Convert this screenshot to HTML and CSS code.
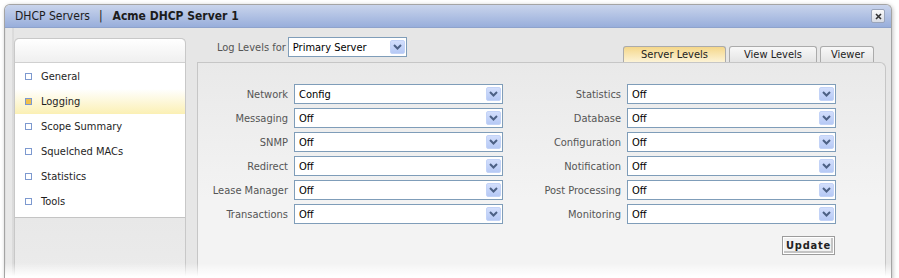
FILE: index.html
```html
<!DOCTYPE html>
<html lang="en">
<head>
  <meta charset="UTF-8" />
  <title>Acme DHCP Server 1</title>
  <link rel="stylesheet" href="styles.css">
</head>
<body>
  <div class="window">
    <div class="titlebar">
      <span class="crumb">DHCP Servers</span>
      <span class="sep">|</span>
      <span class="current">Acme DHCP Server 1</span>
      <span class="close">
        <svg width="7" height="7" viewBox="0 0 7 7"><path d="M1 1L6 6M6 1L1 6" stroke="#333" stroke-width="1.6"/></svg>
      </span>
    </div>

    <div class="body">
      <div class="sidebar">
        <div class="sidebar-head"></div>
        <ul class="nav">
          <li><span class="bullet"></span>General</li>
          <li class="active"><span class="bullet"></span>Logging</li>
          <li><span class="bullet"></span>Scope Summary</li>
          <li><span class="bullet"></span>Squelched MACs</li>
          <li><span class="bullet"></span>Statistics</li>
          <li><span class="bullet"></span>Tools</li>
        </ul>
        <div class="sidebar-foot"></div>
      </div>

      <div class="main">
        <div class="topbar">
          <div class="log-for">
            <span class="label">Log Levels for</span>
            <div class="select server-select">
              <span class="value">Primary Server</span>
              <span class="arrow"><svg width="9" height="6" viewBox="0 0 9 6"><path d="M1 1L4.5 4.5L8 1" fill="none" stroke="#4d6185" stroke-width="2"/></svg></span>
            </div>
          </div>
          <div class="tabs">
            <div class="tab active">Server Levels</div>
            <div class="tab">View Levels</div>
            <div class="tab">Viewer</div>
          </div>
        </div>

        <div class="panel">
          <div class="levels">
            <span class="label">Network</span>
            <div class="select"><span class="value">Config</span><span class="arrow"><svg width="9" height="6" viewBox="0 0 9 6"><path d="M1 1L4.5 4.5L8 1" fill="none" stroke="#4d6185" stroke-width="2"/></svg></span></div>
            <span class="label">Statistics</span>
            <div class="select"><span class="value">Off</span><span class="arrow"><svg width="9" height="6" viewBox="0 0 9 6"><path d="M1 1L4.5 4.5L8 1" fill="none" stroke="#4d6185" stroke-width="2"/></svg></span></div>

            <span class="label">Messaging</span>
            <div class="select"><span class="value">Off</span><span class="arrow"><svg width="9" height="6" viewBox="0 0 9 6"><path d="M1 1L4.5 4.5L8 1" fill="none" stroke="#4d6185" stroke-width="2"/></svg></span></div>
            <span class="label">Database</span>
            <div class="select"><span class="value">Off</span><span class="arrow"><svg width="9" height="6" viewBox="0 0 9 6"><path d="M1 1L4.5 4.5L8 1" fill="none" stroke="#4d6185" stroke-width="2"/></svg></span></div>

            <span class="label">SNMP</span>
            <div class="select"><span class="value">Off</span><span class="arrow"><svg width="9" height="6" viewBox="0 0 9 6"><path d="M1 1L4.5 4.5L8 1" fill="none" stroke="#4d6185" stroke-width="2"/></svg></span></div>
            <span class="label">Configuration</span>
            <div class="select"><span class="value">Off</span><span class="arrow"><svg width="9" height="6" viewBox="0 0 9 6"><path d="M1 1L4.5 4.5L8 1" fill="none" stroke="#4d6185" stroke-width="2"/></svg></span></div>

            <span class="label">Redirect</span>
            <div class="select"><span class="value">Off</span><span class="arrow"><svg width="9" height="6" viewBox="0 0 9 6"><path d="M1 1L4.5 4.5L8 1" fill="none" stroke="#4d6185" stroke-width="2"/></svg></span></div>
            <span class="label">Notification</span>
            <div class="select"><span class="value">Off</span><span class="arrow"><svg width="9" height="6" viewBox="0 0 9 6"><path d="M1 1L4.5 4.5L8 1" fill="none" stroke="#4d6185" stroke-width="2"/></svg></span></div>

            <span class="label">Lease Manager</span>
            <div class="select"><span class="value">Off</span><span class="arrow"><svg width="9" height="6" viewBox="0 0 9 6"><path d="M1 1L4.5 4.5L8 1" fill="none" stroke="#4d6185" stroke-width="2"/></svg></span></div>
            <span class="label">Post Processing</span>
            <div class="select"><span class="value">Off</span><span class="arrow"><svg width="9" height="6" viewBox="0 0 9 6"><path d="M1 1L4.5 4.5L8 1" fill="none" stroke="#4d6185" stroke-width="2"/></svg></span></div>

            <span class="label">Transactions</span>
            <div class="select"><span class="value">Off</span><span class="arrow"><svg width="9" height="6" viewBox="0 0 9 6"><path d="M1 1L4.5 4.5L8 1" fill="none" stroke="#4d6185" stroke-width="2"/></svg></span></div>
            <span class="label">Monitoring</span>
            <div class="select"><span class="value">Off</span><span class="arrow"><svg width="9" height="6" viewBox="0 0 9 6"><path d="M1 1L4.5 4.5L8 1" fill="none" stroke="#4d6185" stroke-width="2"/></svg></span></div>
          </div>
          <div class="actions">
            <button class="update-btn">Update</button>
          </div>
        </div>
      </div>
    </div>
  </div>
</body>
</html>
```

FILE: styles.css
```css
body {
  margin: 0;
  padding: 4px 7px 0 4px;
  height: 278px;
  box-sizing: border-box;
  background: #fff;
  font-family: 'DejaVu Sans Condensed', 'DejaVu Sans', sans-serif;
  font-stretch: condensed;
  font-size: 11px;
  color: #222;
  overflow: hidden;
}

.window {
  position: relative;
  height: 274px;
  border: 1px solid #a4a4a4;
  border-bottom: 0;
  border-radius: 6px 6px 0 0;
  background: #e3e3e3;
  box-shadow: 1px 1px 4px rgba(0, 0, 0, 0.25);
  overflow: hidden;
}

/* fade out the bottom edge */
.window::after {
  content: '';
  position: absolute;
  left: 0;
  right: 0;
  bottom: 0;
  height: 16px;
  background: linear-gradient(rgba(255, 255, 255, 0), #fff 85%);
}

.titlebar {
  display: flex;
  align-items: center;
  height: 22px;
  padding: 0 6px 0 10px;
  border-bottom: 1px solid #8ea3cc;
  background: linear-gradient(#c9d4ec, #98aedb);
  font-size: 12px;
  color: #1c1c1c;
}

.sep {
  margin: 0 10px 0 9px;
}

.current {
  font-weight: bold;
}

.close {
  margin-left: auto;
  width: 12px;
  height: 12px;
  display: flex;
  align-items: center;
  justify-content: center;
  border: 1px solid #9aa5bb;
  border-radius: 2px;
  background: linear-gradient(#fafafa, #d8dce4);
}

.body {
  display: flex;
  gap: 11px;
  padding: 10px 5px 0 9px;
  background: linear-gradient(90deg, #d6d6d6 0, #e8e8e8 1px, #e8e8e8 7px, #cfcfcf 8px, #e6e6e6 9px);
  height: 251px;
}

/* sidebar */
.sidebar {
  width: 170px;
  border: 1px solid #c8c8c8;
  border-bottom: 0;
  border-radius: 5px 5px 0 0;
  background: #e9e9e9;
  display: flex;
  flex-direction: column;
}

.sidebar-head {
  height: 23px;
  border-radius: 5px 5px 0 0;
  border-bottom: 1px solid #d0d0d0;
  background: linear-gradient(#fff, #efefef);
}

.nav {
  list-style: none;
  margin: 0;
  padding: 1px 0 3px;
  background: #fff;
  border-bottom: 1px solid #c4c4c4;
}

.nav li {
  display: flex;
  align-items: center;
  height: 25px;
  padding-left: 10px;
  color: #1e1e1e;
}

.nav li.active {
  background: linear-gradient(#fff, #fbf0b4);
}

.bullet {
  width: 5px;
  height: 5px;
  margin-right: 9px;
  border: 1px solid #7d99cf;
  background: #fff;
}

.nav li.active .bullet {
  background: #f0c04c;
}

.sidebar-foot {
  flex: 1;
  background: linear-gradient(#e8e8e8, #ececec);
}

/* main area */
.main {
  flex: 1;
  display: flex;
  flex-direction: column;
}

.topbar {
  display: flex;
  justify-content: space-between;
  align-items: flex-end;
  height: 25px;
  padding: 0 12px 0 20px;
  margin-top: -1px;
}

.log-for {
  align-self: flex-start;
  display: flex;
  align-items: center;
  gap: 2px;
}

.log-for .label {
  color: #555;
}

.server-select {
  width: 119px;
}

.tabs {
  display: flex;
  gap: 3px;
}

.tab {
  height: 15px;
  line-height: 15px;
  padding: 0 10px;
  border: 1px solid #ababab;
  border-bottom: 0;
  border-radius: 3px 3px 0 0;
  background: linear-gradient(#f8f8f8, #e4e4e4);
  color: #222;
  text-align: center;
}

.tab.active {
  width: 81px;
  background: linear-gradient(#f5d78a, #fcf3d6);
}

.tab:nth-child(2) {
  width: 66px;
}

.tab:nth-child(3) {
  width: 32px;
}

.panel {
  flex: 1;
  border: 1px solid #c6c6c6;
  border-bottom: 0;
  border-radius: 0 6px 0 0;
  background: linear-gradient(#e9e9e9, #f3f3f3 60%);
  padding-top: 21px;
}

.levels {
  display: grid;
  grid-template-columns: 90px 209px 112px 209px;
  column-gap: 6px;
  row-gap: 4px;
  align-items: center;
}

.levels .label {
  text-align: right;
  color: #555;
  white-space: nowrap;
}

.select {
  display: flex;
  align-items: center;
  height: 20px;
  box-sizing: border-box;
  border: 1px solid #7f9db9;
  background: #fff;
  color: #000;
}

.select .value {
  flex: 1;
  padding-left: 4px;
}

.arrow {
  width: 15px;
  height: 14px;
  margin-right: 1px;
  display: flex;
  align-items: center;
  justify-content: center;
  border: 1px solid #c3d3f7;
  border-radius: 2px;
  background: linear-gradient(#d2defc, #b6c9f5);
  box-sizing: border-box;
}

.actions {
  display: flex;
  width: 637px;
  justify-content: flex-end;
  padding-top: 12px;
}

.update-btn {
  width: 53px;
  height: 19px;
  padding: 0;
  border: 1px solid #9c9c9c;
  box-shadow: inset 0 0 0 1px #fff, inset -1px -1px 0 2px #c4c4c4;
  background: #f2f2f2;
  font-family: 'DejaVu Sans Condensed', 'DejaVu Sans', sans-serif;
  font-stretch: condensed;
  font-size: 11px;
  font-weight: bold;
  letter-spacing: 0.8px;
  color: #222;
}
```
